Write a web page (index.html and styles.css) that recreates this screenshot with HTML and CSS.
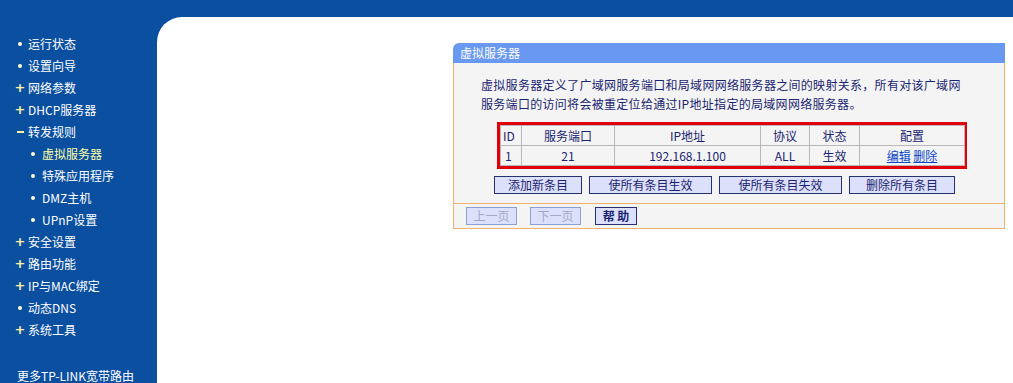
FILE: index.html
```html
<!DOCTYPE html>
<html lang="zh-CN">
    <head>
        <meta charset="UTF-8">
        <meta name="viewport" content="width=device-width, initial-scale=1.0">
        <title>虚拟服务器</title>
        <link rel="stylesheet" href="styles.css">
    </head>
    <body>
        <div class="topbar"></div>
        <div class="frame">
            <nav class="menu">
                <div class="item"><span class="dot"></span>运行状态</div>
                <div class="item"><span class="dot"></span>设置向导</div>
                <div class="item"><span class="plus">+</span>网络参数</div>
                <div class="item"><span class="plus">+</span>DHCP服务器</div>
                <div class="item"><span class="minus"></span>转发规则</div>
                <div class="item sub active"><span class="dot"></span>虚拟服务器</div>
                <div class="item sub"><span class="dot"></span>特殊应用程序</div>
                <div class="item sub"><span class="dot"></span>DMZ主机</div>
                <div class="item sub"><span class="dot"></span>UPnP设置</div>
                <div class="item"><span class="plus">+</span>安全设置</div>
                <div class="item"><span class="plus">+</span>路由功能</div>
                <div class="item"><span class="plus">+</span>IP与MAC绑定</div>
                <div class="item"><span class="dot"></span>动态DNS</div>
                <div class="item"><span class="plus">+</span>系统工具</div>
                <div class="more">更多TP-LINK宽带路由</div>
            </nav>
            <main class="content">
                <div class="panel">
                    <div class="panel-title">虚拟服务器</div>
                    <div class="panel-body">
                        <p class="intro">虚拟服务器定义了广域网服务端口和局域网网络服务器之间的映射关系，所有对该广域网服务端口的访问将会被重定位给通过IP地址指定的局域网网络服务器。</p>
                        <div class="mark">
                            <table class="rules">
                                <tr>
                                    <th class="c-id">ID</th>
                                    <th class="c-port">服务端口</th>
                                    <th class="c-ip">IP地址</th>
                                    <th class="c-proto">协议</th>
                                    <th class="c-state">状态</th>
                                    <th class="c-conf">配置</th>
                                </tr>
                                <tr>
                                    <td class="c-id left">1</td>
                                    <td>21</td>
                                    <td>192.168.1.100</td>
                                    <td>ALL</td>
                                    <td>生效</td>
                                    <td><a href="#">编辑</a> <a href="#">删除</a></td>
                                </tr>
                            </table>
                        </div>
                        <div class="actions">
                            <button class="btn w-add">添加新条目</button>
                            <button class="btn w-all">使所有条目生效</button>
                            <button class="btn w-all">使所有条目失效</button>
                            <button class="btn w-del">删除所有条目</button>
                        </div>
                    </div>
                    <div class="panel-foot">
                        <button class="btn w-page" disabled>上一页</button>
                        <button class="btn w-page" disabled>下一页</button>
                        <button class="btn w-help">帮 助</button>
                    </div>
                </div>
            </main>
        </div>
    </body>
</html>
```

FILE: styles.css
```css
*{
    margin: 0;
    padding: 0;
    box-sizing: border-box;
}
body{
    background-color: #0b4fa0;
    font-family: "Noto Sans CJK SC", "Liberation Sans", sans-serif;
    font-size: 12px;
    height: 383px;
    overflow: hidden;
}
.topbar{
    height: 17px;
}
.frame{
    display: flex;
    height: 366px;
}
.menu{
    width: 157px;
    padding: 16px 0 0 16px;
    color: #ffffff;
}
.item{
    display: flex;
    align-items: center;
    height: 22px;
    line-height: 22px;
}
.item.sub{
    padding-left: 13px;
}
.item.active{
    color: #ffffa8;
}
.dot, .plus, .minus{
    width: 8px;
    margin-right: 4px;
    display: flex;
    justify-content: center;
    align-items: center;
}
.item.sub .dot{
    margin-right: 5px;
}
.dot::before{
    content: "";
    width: 4px;
    height: 4px;
    border-radius: 50%;
    background-color: #fffbd0;
}
.plus{
    color: #fff2a0;
    font-weight: bold;
    font-size: 13px;
    font-family: "DejaVu Sans", sans-serif;
}
.minus::before{
    content: "";
    width: 7px;
    height: 2px;
    background-color: #fff2a0;
}
.more{
    margin-top: 24px;
    margin-left: 1px;
    line-height: 22px;
    white-space: nowrap;
}
.content{
    flex: 1;
    background-color: #ffffff;
    border-top-left-radius: 25px;
    padding: 26px 0 0 296px;
}
.panel{
    width: 552px;
    color: #1a2470;
}
.panel-title{
    height: 20px;
    line-height: 20px;
    padding-left: 7px;
    background-color: #6898f0;
    color: #ffffff;
    border-top-left-radius: 6px;
}
.panel-body{
    background-color: #f4f4f4;
    border-left: 1px solid #eeb36a;
    border-right: 1px solid #eeb36a;
    border-bottom: 1px solid #eeb36a;
    padding: 12px 0 9px 0;
}
.intro{
    width: 484px;
    margin-left: 27px;
    line-height: 19px;
    letter-spacing: 0.3px;
}
.mark{
    margin: 9px 0 0 43px;
    width: 470px;
    border: 3px solid #e0000c;
}
.rules{
    width: 464px;
    border-collapse: collapse;
    table-layout: fixed;
}
.rules th, .rules td{
    height: 20px;
    border: 1px solid #b8b8b8;
    font-weight: normal;
    text-align: center;
    padding: 0;
    line-height: 18px;
}
.rules .left{
    text-align: left;
    padding-left: 4px;
}
.rules th.c-id{
    text-align: left;
    padding-left: 2px;
}
.c-id{ width: 21px; }
.c-port{ width: 93px; }
.c-ip{ width: 146px; }
.c-proto{ width: 49px; }
.c-state{ width: 50px; }
.c-conf{ width: 105px; }
.rules a{
    color: #0b46c8;
}
.actions{
    display: flex;
    gap: 6px;
    margin: 7px 0 0 40px;
}
.btn{
    height: 18px;
    font-family: inherit;
    font-size: 12px;
    line-height: 16px;
    color: #1a2470;
    background-color: #dde0fa;
    border: 1px solid #273070;
    cursor: pointer;
}
.w-add{ width: 88px; }
.w-all{ width: 123px; margin-left: 1px; }
.w-del{ width: 106px; margin-left: 1px; }
.panel-foot{
    display: flex;
    gap: 13px;
    padding: 3px 0 3px 12px;
    background-color: #f4f4f4;
    border-left: 1px solid #eeb36a;
    border-right: 1px solid #eeb36a;
    border-bottom: 1px solid #eeb36a;
}
.w-page{
    width: 51px;
    color: #a4a8c8;
    border-color: #8aa0d0;
}
.w-help{
    width: 42px;
    font-weight: bold;
    margin-left: 1px;
}
```
